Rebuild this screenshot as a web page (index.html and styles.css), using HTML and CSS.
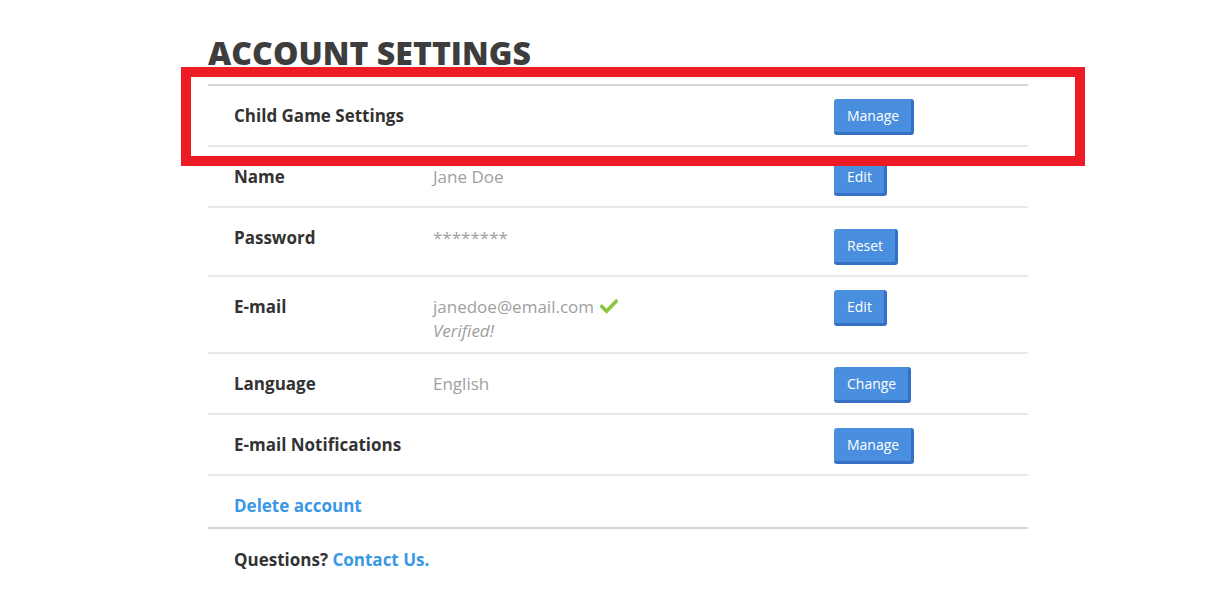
FILE: index.html
```html
<!DOCTYPE html>
<html lang="en">
<head>
<meta charset="utf-8">
<title>Account Settings</title>
<link rel="stylesheet" href="styles.css">
</head>
<body>
<main class="page">
  <h1 class="title">ACCOUNT SETTINGS</h1>
  <div class="table">
    <div class="row">
      <div class="label">Child Game Settings</div>
      <div class="value"></div>
      <div class="action"><button class="btn">Manage</button></div>
    </div>
    <div class="row">
      <div class="label">Name</div>
      <div class="value">Jane Doe</div>
      <div class="action"><button class="btn">Edit</button></div>
    </div>
    <div class="row">
      <div class="label">Password</div>
      <div class="value">********</div>
      <div class="action action-low"><button class="btn">Reset</button></div>
    </div>
    <div class="row row-tall">
      <div class="label">E-mail</div>
      <div class="value">
        <div class="email">janedoe@email.com
          <svg class="check" viewBox="0 0 18 15" width="18" height="15" aria-hidden="true"><path d="M1.8 7.6 L6.6 12.2 L16.2 2.2" fill="none" stroke="#8cc63f" stroke-width="3.6" stroke-linecap="square"/></svg>
        </div>
        <div class="verified">Verified!</div>
      </div>
      <div class="action"><button class="btn">Edit</button></div>
    </div>
    <div class="row">
      <div class="label">Language</div>
      <div class="value">English</div>
      <div class="action"><button class="btn">Change</button></div>
    </div>
    <div class="row">
      <div class="label">E-mail Notifications</div>
      <div class="value"></div>
      <div class="action"><button class="btn">Manage</button></div>
    </div>
    <div class="row row-link">
      <a class="link label-link" href="#">Delete account</a>
    </div>
    <div class="footer">
      <span class="label-inline">Questions?</span> <a class="link" href="#">Contact Us.</a>
    </div>
  </div>
  <div class="highlight"></div>
</main>
</body>
</html>
```

FILE: styles.css
```css
html, body {
  margin: 0;
  padding: 0;
  background: #ffffff;
}

body {
  font-family: "Open Sans", "Liberation Sans", sans-serif;
  color: #333333;
}

.page {
  position: relative;
  width: 820px;
  margin-left: 208px;
  padding-top: 33px;
}

.title {
  margin: 0;
  font-size: 32px;
  line-height: 40px;
  height: 51px;
  font-weight: 800;
  color: #3d3d3d;
  letter-spacing: 0.05px;
}

.table {
  border-top: 2px solid #d6d6d6;
}

.row {
  display: grid;
  grid-template-columns: 199px 401px auto;
  align-items: start;
  padding: 13px 0 10px 26px;
  border-bottom: 2px solid #e8e8e8;
}

.label {
  margin-top: 5px;
  font-size: 17px;
  line-height: 24px;
  font-weight: 700;
  color: #333333;
}

.value {
  margin-top: 5px;
  font-size: 17px;
  line-height: 24px;
  color: #a0a0a0;
}

.email {
  display: flex;
  align-items: center;
  gap: 6px;
}

.check {
  display: block;
  margin-top: -2px;
}

.verified {
  font-style: italic;
}

.action {
  display: flex;
}

.action-low {
  margin-top: 8px;
}

.row-tall {
  padding-bottom: 9px;
}

.btn {
  height: 36px;
  padding: 0 12px 0 13px;
  font-family: "Open Sans", "Liberation Sans", sans-serif;
  font-size: 14px;
  line-height: 33px;
  color: #ffffff;
  background: #4a8fdf;
  border: none;
  border-right: 3px solid #3670c4;
  border-bottom: 3px solid #3670c4;
  border-radius: 3px;
  cursor: pointer;
}

.row-link {
  display: block;
  padding-bottom: 9px;
  border-bottom: 2px solid #d6d6d6;
}

.link {
  font-size: 17px;
  line-height: 24px;
  font-weight: 700;
  color: #3a97e6;
  text-decoration: none;
}

.label-link {
  display: inline-block;
  margin-top: 5px;
}

.footer {
  padding: 19px 0 0 26px;
  font-size: 17px;
  line-height: 24px;
  font-weight: 700;
}

.label-inline {
  color: #333333;
}

.highlight {
  position: absolute;
  left: -27px;
  top: 67px;
  width: 884px;
  height: 79px;
  border: 10px solid #ed1c24;
  pointer-events: none;
}
```
